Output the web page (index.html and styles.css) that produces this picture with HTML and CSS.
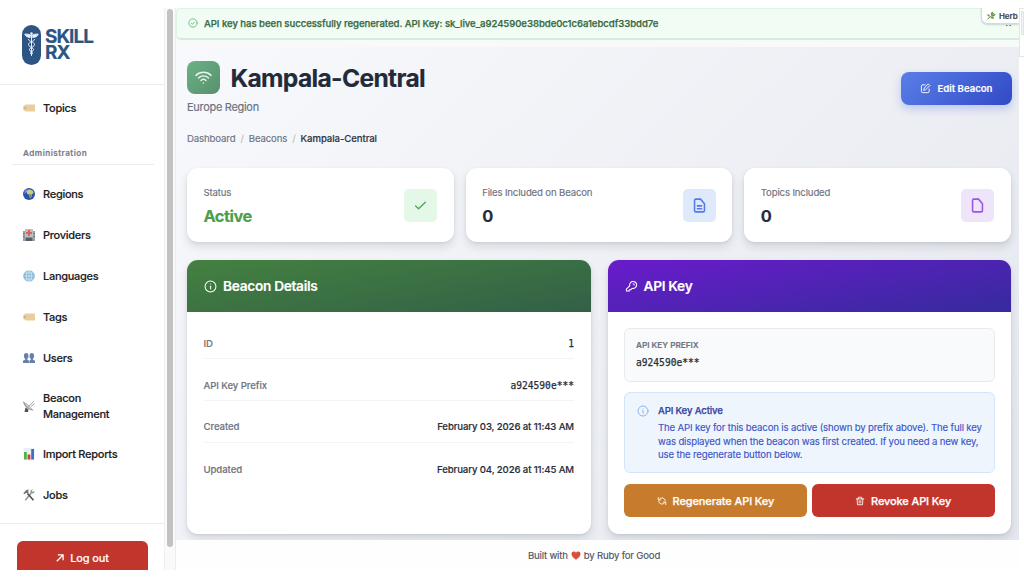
FILE: index.html
```html
<!DOCTYPE html>
<html lang="en">
<head>
<meta charset="utf-8">
<title>SkillRx – Kampala-Central</title>
<link rel="stylesheet" href="styles.css">
</head>
<body>
<svg class="defs" width="0" height="0">
  <symbol id="tag" viewBox="0 0 12 12"><path d="M2.500 2.600H12v6.900H2.500L.2 7.800V4.300z" fill="#e9cda0"/><circle cx="2" cy="6" r=".7" fill="#a98958"/></symbol>
</svg>
<div class="app">
  <aside class="sidebar">
    <div class="brand">
      <svg class="brand-mark" viewBox="0 0 19 40"><rect width="19" height="40" rx="9.5" fill="#2d5584"/><g fill="none" stroke="#e8eef5" stroke-width="1"><path d="M9.500 8v23" /><path d="M9 10.500C6.500 8.500 4.500 9.500 2.800 9c.5 2 2 3.300 5.700 3.500M10 10.500c2.500-2 4.500-1 6.200-1.500-.5 2-2 3.300-5.700 3.500" fill="#e8eef5"/><path d="M6.500 14c0 3 6 2.500 6 5.500s-5 2.500-5 5 3.500 2 3 4.500M12.500 14c0 3-6 2.500-6 5.500s5 2.500 5 5-3.500 2-3 4.500"/></g><circle cx="9.500" cy="8.500" r="1.300" fill="#e8eef5"/></svg>
      <div class="brand-name">SKILL<br>RX</div>
    </div>
    <nav class="nav">
      <a class="item topics"><svg class="emoji"><use href="#tag"/></svg><span>Topics</span></a>
      <div class="nav-title">Administration</div>
      <a class="item"><svg class="emoji" viewBox="0 0 12 12"><circle cx="6" cy="6" r="6" fill="#2f4fae"/><path d="M1.500 3A6 6 0 0 1 5 .5L4 3.500 1.500 6z" fill="#6f8fd8"/><path d="M4 2.500 6.500 1.300 9.800 2.800 10.600 5 9 6.300 8.300 9.300 7 10.300 6 6.500 3.800 5.700z" fill="#c7cf78"/><path d="M6 6.300 8.800 6.300 8.300 9 7 10z" fill="#6e9a58"/></svg><span>Regions</span></a>
      <a class="item"><svg class="emoji" viewBox="0 0 12 12"><path d="M0 2h2v10H0zM10 2h2v10h-2z" fill="#9aa0a5"/><path d="M2 0h8v12H2z" fill="#b9bfc2"/><path d="M2.500 8.500h7V12h-7z" fill="#53606b"/><path d="M5 1h2v2h2v2H7v2H5V5H3V3h2z" fill="#e0605b"/><path d="M0 4h1.500v1H0zM0 7h1.500v1H0zM10.500 4H12v1h-1.500zM10.500 7H12v1h-1.500z" fill="#66727a"/></svg><span>Providers</span></a>
      <a class="item"><svg class="emoji" viewBox="0 0 12 12"><circle cx="6" cy="6" r="5.800" fill="#7fb6d8"/><g fill="none" stroke="#e4f2fa" stroke-width=".65"><ellipse cx="6" cy="6" rx="2.700" ry="5.600"/><path d="M6 .3v11.400M.4 6h11.200M1.300 3h9.400M1.300 9h9.400"/></g></svg><span>Languages</span></a>
      <a class="item"><svg class="emoji"><use href="#tag"/></svg><span>Tags</span></a>
      <a class="item"><svg class="emoji" viewBox="0 0 12 12"><g fill="#6680aa"><ellipse cx="3.200" cy="4" rx="2.300" ry="3"/><path d="M2.300 6h1.900v1.500L6 8.800V11H0V8.800l2.300-1.200z"/><ellipse cx="8.800" cy="4" rx="2.300" ry="3"/><path d="M7.900 6h1.900v1.500L12 8.800V11H6.400V8.800l1.500-1.200z"/></g></svg><span>Users</span></a>
      <a class="item double"><svg class="emoji" viewBox="0 0 12 12"><path d="M0 1.500C1 6 4.500 10 10.800 10.500 8 8 4 3 0 1.500z" fill="#858a8e"/><path d="M1 2.500C4 3.500 8 7 10 10 6 9 3 7 1 2.500z" fill="#c3c7ca"/><path d="M5.500 6.500 11 1.300M8 6.500l3.500-2.800" stroke="#8a8d90" stroke-width=".8"/><path d="M2.500 7.500 5.500 9.500 5 12H1.500z" fill="#4c5258"/></svg><span>Beacon<br>Management</span></a>
      <a class="item"><svg class="emoji" viewBox="0 0 12 12"><path d="M.5 0h11v12H.5z" fill="#e8eff5"/><path d="M1 4h2.800v7.500H1z" fill="#54b04a"/><path d="M4.600 6.500h2.800v5H4.600z" fill="#cf4338"/><path d="M8.200 1H11v10.500H8.200z" fill="#3d70c4"/></svg><span>Import Reports</span></a>
      <a class="item"><svg class="emoji" viewBox="0 0 12 12"><path d="m2.300 11.300 6.500-8" stroke="#92979b" stroke-width="1.500"/><path d="M11.200 1.500 9.700 3l-1-1L10 .5C8.300 0 7 1.500 7.500 3.200L9 4.500c1.800.3 3-1.300 2.200-3z" fill="#92979b"/><path d="m4.500 4.500 6 6.700" stroke="#4e5357" stroke-width="1.700"/><path d="M.3 4.200 3.300 1l3-.6L5 2l.8 1.200-1.500 1.600L3 3.800 1.500 5.300z" fill="#6f767b"/></svg><span>Jobs</span></a>
    </nav>
    <div class="sidebar-foot">
      <a class="logout"><svg class="arrow" viewBox="0 0 8 8"><path d="M.8 7.200 7 1M1.800.9h5.300v5.300" fill="none" stroke="#fff" stroke-width="1.300"/></svg>Log out</a>
    </div>
  </aside>
  <div class="scroll"><div class="thumb"></div></div>
  <div class="page">
    <div class="flash"><svg viewBox="0 0 24 24" class="line"><circle cx="12" cy="12" r="10"/><path d="m8 12.500 2.800 2.500L16 9.500"/></svg><span>API key has been successfully regenerated. API Key: sk_live_a924590e38bde0c1c6a1ebcdf33bdd7e</span></div>
    <main class="main">
      <header class="head">
        <div class="head-info">
          <div class="title-row">
            <div class="title-icon"><svg viewBox="0 0 24 24" class="line"><path d="M1.400 9a15 15 0 0 1 21.200 0M5 12.600a10 10 0 0 1 14 0M8.500 16.100a5 5 0 0 1 7 0M12 19.800h.01"/></svg></div>
            <h1>Kampala-Central</h1>
          </div>
          <p class="region">Europe Region</p>
          <div class="crumbs"><span>Dashboard</span><i>/</i><span>Beacons</span><i>/</i><b>Kampala-Central</b></div>
        </div>
        <a class="edit"><svg viewBox="0 0 24 24" class="line"><path d="M11 4H6a3 3 0 0 0-3 3v11a3 3 0 0 0 3 3h11a3 3 0 0 0 3-3v-5"/><path d="m18.500 2.500 3 3L12 15l-4 1 1-4z"/></svg>Edit Beacon</a>
      </header>
      <section class="stats">
        <div class="card stat"><div><p>Status</p><strong class="active">Active</strong></div><div class="badge green"><svg viewBox="0 0 24 24" class="line"><path d="m3 13 5.500 5L21 6"/></svg></div></div>
        <div class="card stat"><div><p>Files Included on Beacon</p><strong>0</strong></div><div class="badge blue"><svg viewBox="0 0 24 24" class="line"><path d="M9 12.500h6M9 16.500h6M17 21H7a2 2 0 0 1-2-2V5a2 2 0 0 1 2-2h6.500L19 9.400V19a2 2 0 0 1-2 2z"/></svg></div></div>
        <div class="card stat"><div><p>Topics Included</p><strong>0</strong></div><div class="badge purple"><svg viewBox="0 0 24 24" class="line"><path d="M7 21h10a2 2 0 0 0 2-2V9.400L13.500 3H7a2 2 0 0 0-2 2v14a2 2 0 0 0 2 2z"/></svg></div></div>
      </section>
      <section class="panels">
        <div class="card panel">
          <h2 class="bar bar-green"><svg viewBox="0 0 24 24" class="line"><circle cx="12" cy="12" r="10"/><path d="M11.500 11.500h.8v5M12 7.500h.01"/></svg>Beacon Details</h2>
          <dl class="rows">
            <div><dt>ID</dt><dd class="mono">1</dd></div>
            <div><dt>API Key Prefix</dt><dd class="mono">a924590e***</dd></div>
            <div><dt>Created</dt><dd>February 03, 2026 at 11:43 AM</dd></div>
            <div><dt>Updated</dt><dd>February 04, 2026 at 11:45 AM</dd></div>
          </dl>
        </div>
        <div class="card panel">
          <h2 class="bar bar-purple"><svg viewBox="0 0 24 24" class="line"><path d="M15 7a2 2 0 0 1 2 2m4.500 0a6.500 6.500 0 0 1-8 6.300L10.500 18H8v2.500H2.500V17l6.200-6.300A6.500 6.500 0 1 1 21.500 9z"/></svg>API Key</h2>
          <div class="key-body">
            <div class="prefix"><span>API KEY PREFIX</span><code>a924590e***</code></div>
            <div class="notice"><svg viewBox="0 0 24 24" class="line"><circle cx="12" cy="12" r="10"/><path d="M11.500 11.500h.8v5M12 7.500h.01"/></svg><div><b>API Key Active</b><p>The API key for this beacon is active (shown by prefix above). The full key<br>was displayed when the beacon was first created. If you need a new key,<br>use the regenerate button below.</p></div></div>
            <div class="actions">
              <a class="regen"><svg viewBox="0 0 24 24" class="line"><path d="M3 3.500v6h6M4 9.500a8.500 8.500 0 0 1 16 1.500M21 20.500v-6h-6M20 14.500A8.500 8.500 0 0 1 4 13"/></svg>Regenerate API Key</a>
              <a class="revoke"><svg viewBox="0 0 24 24" class="line"><path d="M3 7h18M8 7V3h8v4M5 7l1 14h12l1-14M10 11v6M14 11v6"/></svg>Revoke API Key</a>
            </div>
          </div>
        </div>
      </section>
    </main>
    <footer class="foot">Built with <svg viewBox="0 0 10 10" class="heart"><path d="M5 9.600C2 7.400 0 5.500 0 3.200 0 .4 3.600-.3 5 2 6.400-.3 10 .4 10 3.200 10 5.500 8 7.400 5 9.600z" fill="#d9513c"/></svg> by Ruby for Good</footer>
    <div class="herb"><svg viewBox="0 0 10 10"><path d="M.5 9 5 5.500M5 5.500 8 2" stroke="#5d8a43" stroke-width="1"/><path d="M4.500 5C3.500 2.500 5 1 6.500.5 7 2.500 6.500 4 4.500 5zM5 6C5.500 4 7.500 3 9.500 3.500 9 5.500 7 6.500 5 6zM3.500 6.200C1.500 6.500.3 5 .2 3.500 2 3.300 3.500 4.500 3.500 6.200zM4 7c1-1 3-.5 4 1-1.500 1.200-3.200.8-4-1z" fill="#6c9b4e"/></svg>Herb</div>
    <svg class="close-dots" viewBox="0 0 5 2"><path d="M0 .5h1.500M3.500.5H5" stroke="#667" stroke-width="1"/></svg>
  </div>
  <div class="edge"><div class="edge-box"><div></div></div></div>
</div>
</body>
</html>
```
FILE: styles.css
```css
* { box-sizing: border-box; }
body { margin: 0; background: #fff; font-family: Inter, "Liberation Sans", sans-serif; color: #252d3c; -webkit-text-stroke: .15px; }
h1, h2, p, dl, dd { margin: 0; }
svg { display: block; flex: none; }
.defs { position: absolute; }
.line { fill: none; stroke: currentColor; stroke-width: 2; stroke-linecap: round; stroke-linejoin: round; }
.app { display: flex; height: 570px; width: 1024px; padding-top: 8px; overflow: hidden; }

.sidebar { width: 164px; flex: none; display: flex; flex-direction: column; }
.brand { height: 77px; border-bottom: 1px solid #ececee; display: flex; align-items: center; gap: 4px; padding: 0 0 3px 22px; flex: none; }
.brand-mark { width: 19px; height: 40px; }
.brand-name { font-size: 19px; line-height: 16.500px; font-weight: 700; color: #2d5584; letter-spacing: -1px; padding-top: 1px; }
.nav { height: 438px; flex: none; }
.item { display: flex; align-items: center; height: 41px; padding-left: 23px; gap: 8px; font-size: 11px; line-height: 16.400px; font-weight: 500; letter-spacing: -.28px; color: #202022; }
.item.double { height: 55px; }
.item.topics { margin-top: 2.500px; }
.emoji { width: 12px; height: 12px; }
.nav-title { margin: 18px 10px 9px 12px; padding: 0 0 6px 11px; height: 18px; line-height: 12px; font-size: 8.200px; font-weight: 600; letter-spacing: .45px; color: #777b88; border-bottom: 1px solid #ececee; }
.sidebar-foot { border-top: 1px solid #ececee; padding: 16.500px 16px 0 17px; flex: 1; overflow: hidden; }
.logout { display: flex; align-items: center; justify-content: center; gap: 6px; height: 35px; border-radius: 6px; background: #c1352d; color: #fff; font-size: 11px; font-weight: 500; letter-spacing: -.15px; }
.arrow { width: 8px; height: 8px; }
.scroll { width: 12px; flex: none; border-left: 1px solid #f0f0f0; border-right: 1px solid #ededef; background: #fafafa; padding: 1px 2px; }
.thumb { width: 6px; height: 538px; border-radius: 3px; background: #c2c2c2; }

.page { width: 843px; flex: none; display: flex; flex-direction: column; position: relative; background: #f8f9fb; overflow: hidden; }
.flash { height: 32px; flex: none; display: flex; align-items: center; gap: 6px; padding-left: 11px; background: #f0fcf4; border: 1px solid #dcf4e3; border-bottom: 2px solid #d5ecdd; border-right: 0; border-radius: 5px 0 0 5px; color: #39693f; font-size: 9.600px; font-weight: 500; letter-spacing: -.055px; -webkit-text-stroke: .25px; }
.flash svg { width: 10px; height: 10px; color: #5fb76d; margin-top: -1px; }
.main { margin-top: 7px; height: 493px; flex: none; padding: 14px 8px 0 11px; background: linear-gradient(135deg, #f8f9fc, #e4e7ee); }
.head { display: flex; justify-content: space-between; height: 107px; }
.title-row { display: flex; align-items: center; gap: 11px; height: 33px; margin-left: -.5px; }
.title-icon { width: 33px; height: 33px; border-radius: 8px; background: linear-gradient(135deg, #6bb287, #57906b); color: #e9f5ec; display: grid; place-items: center; }
.title-icon svg { width: 17px; height: 17px; }
h1 { font-size: 24.600px; line-height: 30px; font-weight: 700; color: #222b3b; letter-spacing: -.68px; }
.region { font-size: 11px; line-height: 16px; margin-top: 5px; color: #6b7280; letter-spacing: -.3px; }
.crumbs { display: flex; gap: 5px; font-size: 9.600px; line-height: 14px; margin-top: 17px; color: #6b7280; letter-spacing: -.12px; }
.crumbs i { font-style: normal; color: #bcc1ca; }
.crumbs b { font-weight: 500; color: #2d3543; letter-spacing: -.08px; }
.edit { margin-top: 10.500px; margin-right: -1px; width: 111px; height: 33px; border-radius: 8px; background: linear-gradient(135deg, #5a7fe8, #3249c6); color: #fff; display: flex; align-items: center; justify-content: center; gap: 6px; font-size: 9.600px; font-weight: 600; box-shadow: 0 4px 8px rgba(70, 100, 220, .28); }
.edit svg { width: 11px; height: 11px; }

.card { background: #fff; border-radius: 11px; box-shadow: 0 5px 9px rgba(30, 40, 60, .12), 0 1px 3px rgba(30, 40, 60, .08); }
.stats { display: grid; grid-template-columns: repeat(3, 1fr); gap: 12px; }
.stat { height: 74px; padding: 0 16.500px; display: flex; align-items: center; justify-content: space-between; }
.stat p { font-size: 9.600px; line-height: 14px; color: #6b7280; margin: 2px 0 5px; letter-spacing: -.15px; }
.stat strong { display: block; font-size: 16.400px; line-height: 22px; font-weight: 700; letter-spacing: -.5px; }
.stat .active { color: #4c9e4c; }
.badge { width: 33px; height: 33px; border-radius: 5px; display: grid; place-items: center; }
.badge svg { width: 17px; height: 17px; stroke-width: 2.200; }
.badge.green svg { width: 13px; height: 13px; stroke-width: 2.600; }
.green { background: #e3f8e7; color: #55a75b; }
.blue { background: #dfe9fc; color: #5679e6; }
.purple { background: #eee5fa; color: #9d52e4; }

.panels { display: grid; grid-template-columns: 1fr 1fr; gap: 17px; margin-top: 18px; }
.panel { height: 274px; overflow: hidden; }
.bar { height: 52px; display: flex; align-items: center; gap: 6px; padding-left: 17px; color: #fff; font-size: 13.700px; font-weight: 600; letter-spacing: -.3px; }
.bar svg { width: 13px; height: 13px; stroke-width: 1.900; }
.bar-green { background: linear-gradient(170deg, #448140, #326047); }
.bar-purple { background: linear-gradient(170deg, #6a1bcb, #352b9d); }
.rows { padding: 10px 16.500px; }
.rows > div { display: flex; align-items: center; justify-content: space-between; height: 41.800px; padding-top: 11.500px; border-bottom: 1px solid #f4f4f6; font-size: 9.600px; }
.rows > div:first-child { height: 37px; padding-top: 6.500px; }
.rows > div:last-child { border: 0; }
dt { font-weight: 500; color: #6f7582; letter-spacing: -.08px; }
dd { color: #272e3a; font-weight: 500; letter-spacing: -.12px; }
dd.mono { font-family: "DejaVu Sans Mono", monospace; font-weight: 400; letter-spacing: 0; -webkit-text-stroke: .25px; }
.key-body { padding: 16px 16.500px; }
.prefix { height: 54px; border: 1px solid #e8eaee; border-radius: 6px; background: #f9fafb; padding: 9px 11px; }
.prefix span { display: block; font-size: 8.200px; line-height: 14px; font-weight: 600; color: #6f7582; }
.prefix code { display: block; margin-top: 4px; font: 400 9.600px/14px "DejaVu Sans Mono", monospace; color: #272e3a; -webkit-text-stroke: .25px; }
.notice { height: 81px; margin-top: 10px; border: 1px solid #d5e4fa; border-radius: 6px; background: #eff5fd; display: flex; gap: 9px; padding: 11px 12px; color: #3c55c8; }
.notice svg { width: 12px; height: 12px; margin-top: 1px; color: #82abef; stroke-width: 1.800; }
.notice b { display: block; font-size: 9.600px; line-height: 14px; font-weight: 500; color: #3442a0; letter-spacing: -.15px; -webkit-text-stroke: .25px; }
.notice p { font-size: 9.600px; line-height: 13.700px; margin-top: 3px; white-space: nowrap; letter-spacing: -.15px; }
.actions { display: grid; grid-template-columns: 1fr 1fr; gap: 5px; margin-top: 11px; }
.actions a { height: 33px; border-radius: 6px; display: flex; align-items: center; justify-content: center; gap: 6px; color: #fff; font-size: 11px; font-weight: 500; letter-spacing: -.12px; -webkit-text-stroke: .25px; }
.actions svg { width: 10px; height: 10px; }
.regen { background: #c67c2c; }
.revoke { background: #c1352d; }

.foot { flex: 1; background: #fefefe; display: flex; align-items: center; justify-content: center; gap: 3px; padding-right: 7px; font-size: 9.600px; letter-spacing: -.18px; color: #4b5563; }
.heart { width: 10px; height: 9px; }
.herb { position: absolute; right: 0; top: -2px; width: 38px; height: 18px; padding: 1px 0 0 5px; background: #fff; border: 1px solid #d9d9d9; border-right: 0; border-radius: 0 0 0 6px; display: flex; align-items: center; gap: 3px; font-size: 8px; font-weight: 600; letter-spacing: -.1px; color: #444; box-shadow: 0 1px 2px rgba(0, 0, 0, .15); }
.herb svg { width: 9px; height: 9px; }
.close-dots { position: absolute; right: 8px; top: 17px; width: 5px; height: 2px; }
.edge { flex: 1; background: #fff; }
.edge-box { height: 49px; border: 1px solid #e5e5e7; border-right: 0; padding: 2px 0 0 1px; }
.edge-box div { height: 24px; background: #f1f3f7; border: 1px solid #e2e4ea; border-bottom-color: #cfe6c8; }
```
